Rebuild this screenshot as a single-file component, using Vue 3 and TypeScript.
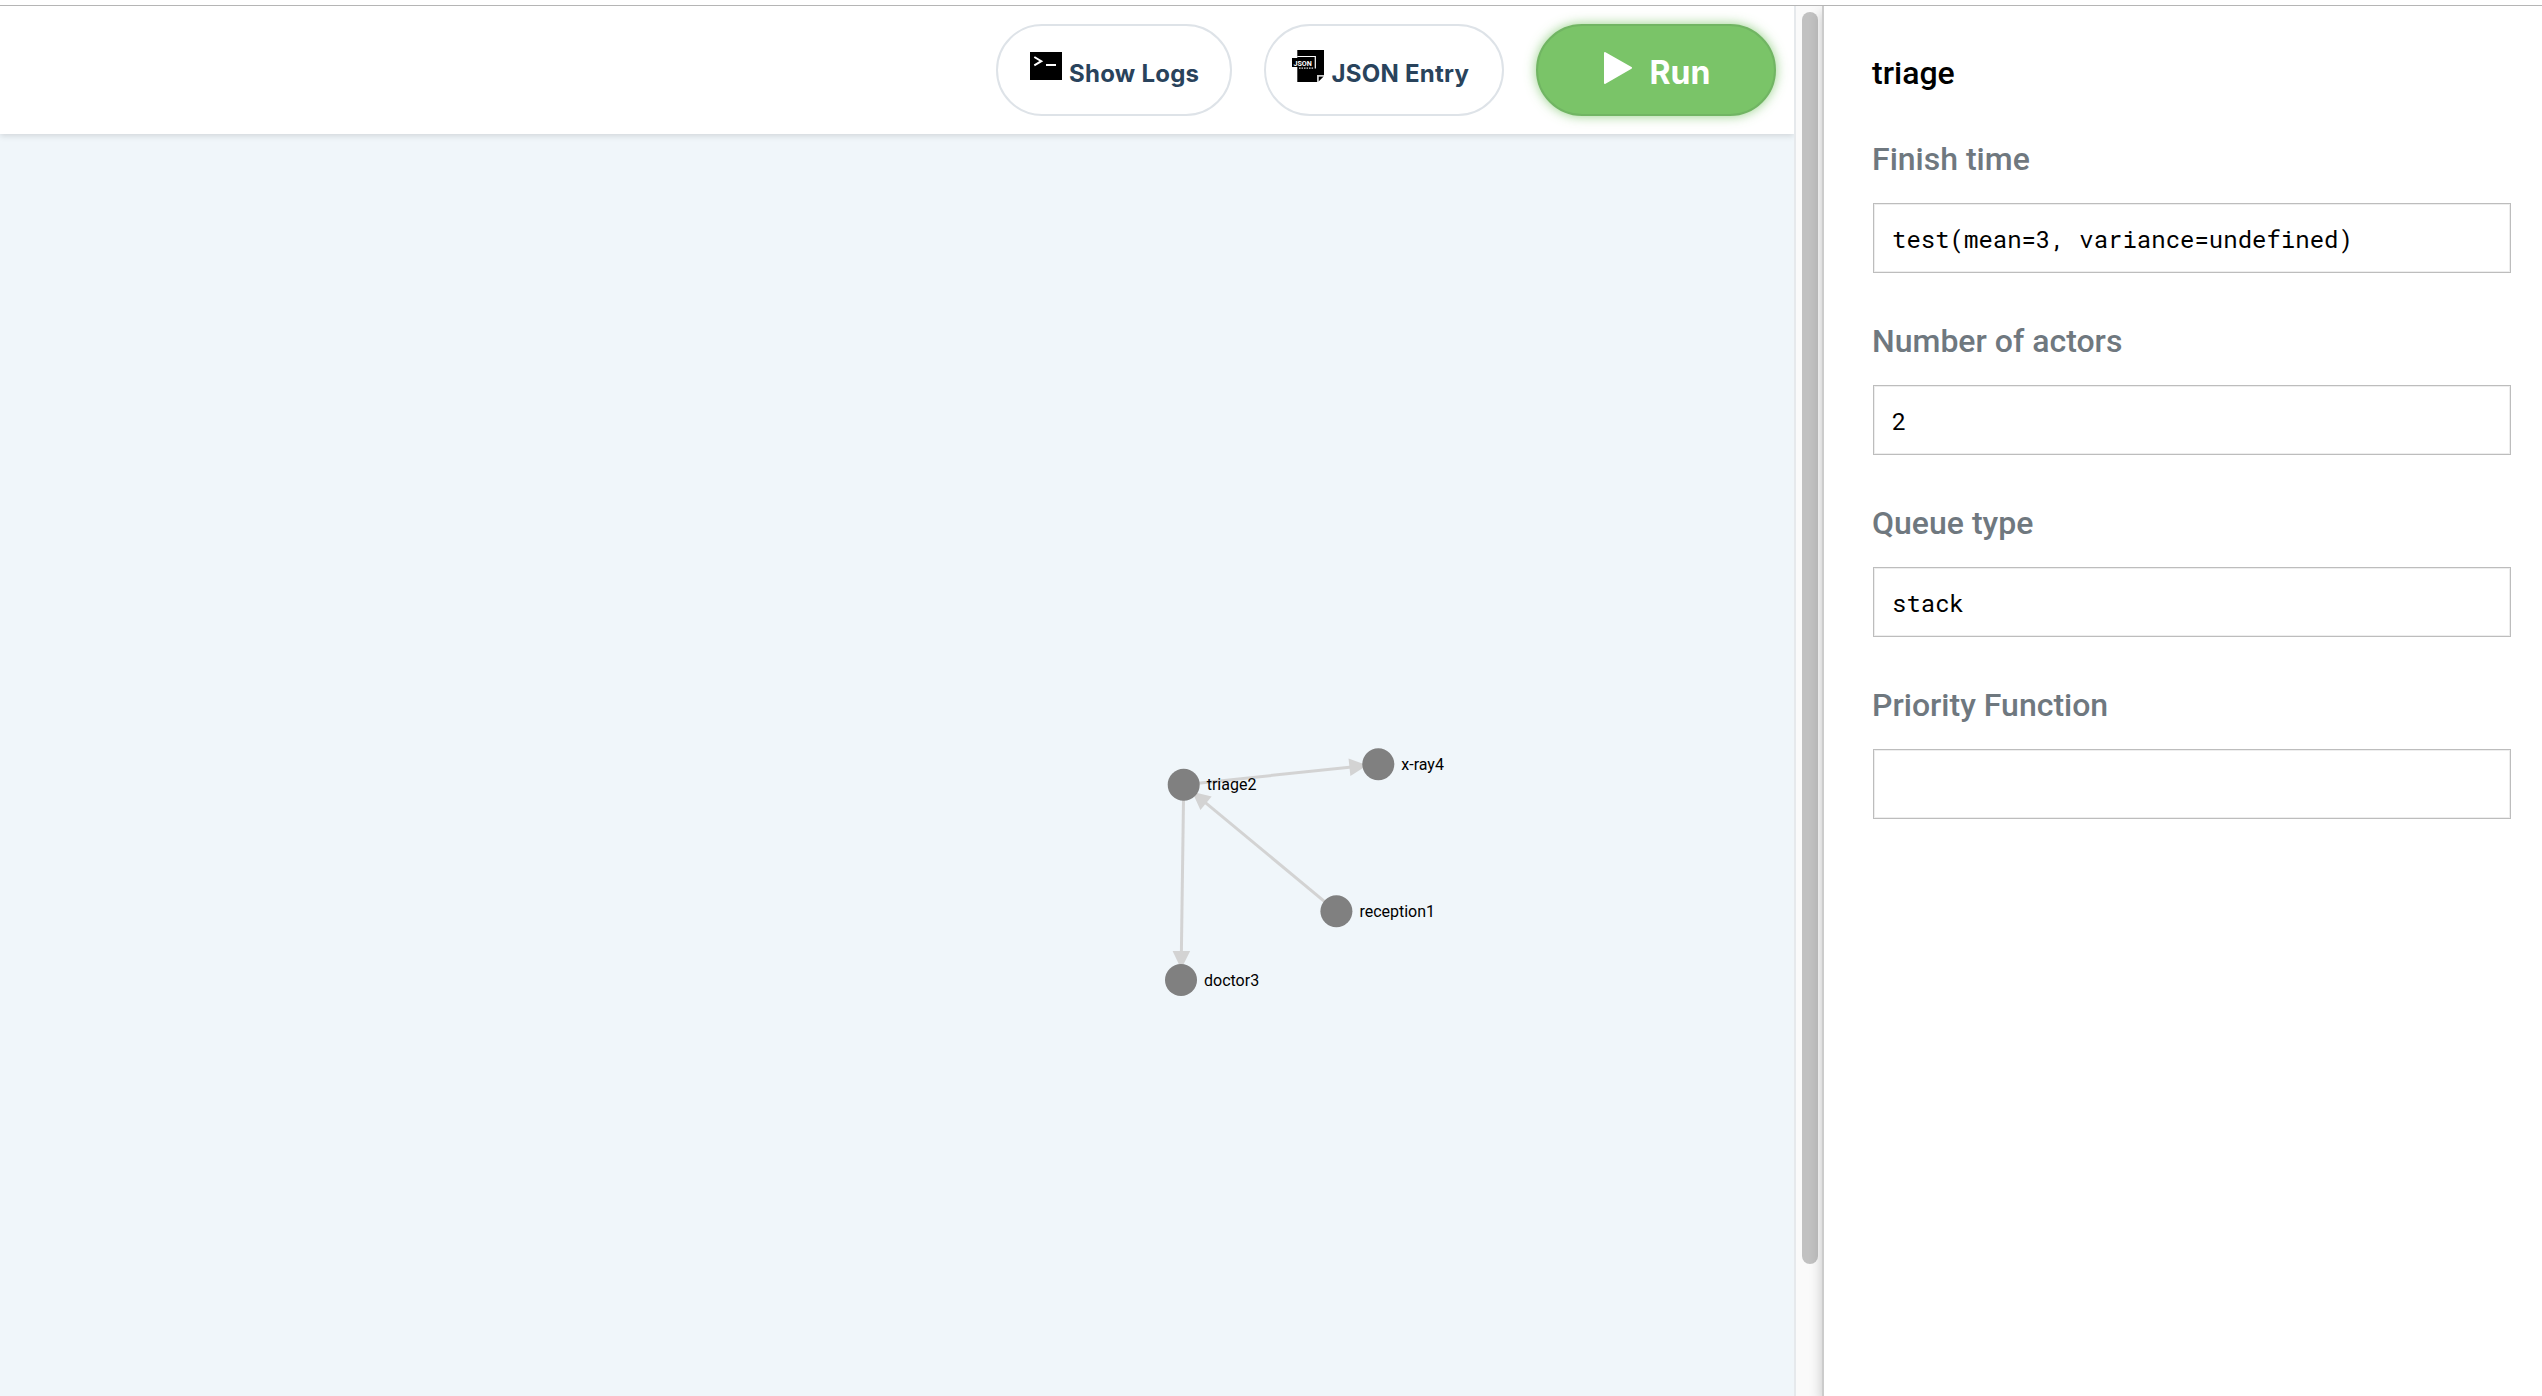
<script setup lang="ts">
interface GraphNode {
  id: string
  x: number
  y: number
}

interface Edge {
  from: GraphNode
  to: GraphNode
}

interface Field {
  label: string
  value: string
}

const triage: GraphNode = { id: 'triage2', x: 1183.7, y: 784.7 }
const xray: GraphNode = { id: 'x-ray4', x: 1378.3, y: 764.2 }
const reception: GraphNode = { id: 'reception1', x: 1336.4, y: 911.3 }
const doctor: GraphNode = { id: 'doctor3', x: 1181, y: 980 }

const nodes = [reception, triage, doctor, xray]
const edges: Edge[] = [
  { from: triage, to: xray },
  { from: reception, to: triage },
  { from: triage, to: doctor },
]

// Arrowhead triangle pointing at the target node, in page units.
function arrow({ from, to }: Edge): string {
  const length = Math.hypot(to.x - from.x, to.y - from.y)
  const ux = (to.x - from.x) / length
  const uy = (to.y - from.y) / length
  const bx = to.x - ux * 29
  const by = to.y - uy * 29
  const points = [
    [to.x - ux * 11, to.y - uy * 11],
    [bx - uy * 8.8, by + ux * 8.8],
    [bx + uy * 8.8, by - ux * 8.8],
  ]
  return points.map((p) => p.join(',')).join(' ')
}

const fields: Field[] = [
  { label: 'Finish time', value: 'test(mean=3, variance=undefined)' },
  { label: 'Number of actors', value: '2' },
  { label: 'Queue type', value: 'stack' },
  { label: 'Priority Function', value: '' },
]
</script>

<template>
  <div class="app">
    <main class="workspace">
      <header class="toolbar">
        <button class="btn logs" type="button">
          <svg class="icon" width="32" height="28" viewBox="0 0 32 28">
            <rect width="32" height="28" fill="#000" />
            <path d="M4.3 5l7 4.2-7 4.2" fill="none" stroke="#fff" stroke-width="2" />
            <rect x="16" y="12" width="10" height="2" fill="#fff" />
          </svg>
          <span>Show Logs</span>
        </button>
        <button class="btn json" type="button">
          <svg class="icon" width="32" height="32" viewBox="0 0 32 32">
            <path d="M5.3 0H32V25H25V32H5.3Z" fill="#000" />
            <path d="M26.6 26.6H31.6L26.6 31.6Z" fill="#000" />
            <path d="M25.6 32V25.6H32" fill="none" stroke="#ccc" stroke-width="1.2" />
            <path d="M5.3 6.5H23.3V18.5" fill="none" stroke="#fff" stroke-width="1.2" />
            <path d="M7 18.2H22" fill="none" stroke="#ddd" stroke-width="1.3" stroke-dasharray="1.6 .9" />
            <rect y="8" width="21.6" height="9" fill="#000" />
            <text
              x="1.4"
              y="15.5"
              class="badge"
              textLength="18.4"
              lengthAdjust="spacingAndGlyphs"
            >JSON</text>
          </svg>
          <span>JSON Entry</span>
        </button>
        <button class="btn run" type="button">
          <svg class="icon" width="28" height="32" viewBox="0 0 28 32">
            <path
              d="M1 1L27 15.8L1 31Z"
              fill="#fff"
              stroke="#fff"
              stroke-width="2"
              stroke-linejoin="round"
            />
          </svg>
          <span>Run</span>
        </button>
      </header>
      <svg class="canvas" width="1794" height="1262" viewBox="0 134 1794 1262">
        <g v-for="edge in edges" :key="edge.from.id + edge.to.id">
          <line
            class="edge"
            :x1="edge.from.x"
            :y1="edge.from.y"
            :x2="edge.to.x"
            :y2="edge.to.y"
          />
          <polygon class="head" :points="arrow(edge)" />
        </g>
        <g v-for="node in nodes" :key="node.id">
          <circle class="node" :cx="node.x" :cy="node.y" r="16" />
          <text class="name" :x="node.x + 23" :y="node.y + 5.6">{{ node.id }}</text>
        </g>
      </svg>
    </main>
    <div class="track"><div class="thumb"></div></div>
    <aside class="panel">
      <h2>triage</h2>
      <div v-for="field in fields" :key="field.label" class="field">
        <label>{{ field.label }}</label>
        <input type="text" :value="field.value" />
      </div>
    </aside>
  </div>
</template>

<style>
body {
  margin: 0;
  overflow: hidden;
}
</style>

<style scoped>
.app {
  box-sizing: border-box;
  display: flex;
  height: 1396px;
  padding-top: 6px;
  background: linear-gradient(#b5b5b5, #b5b5b5) 0 5px / 100% 1px no-repeat #fff;
  overflow: hidden;
}
.workspace {
  display: flex;
  flex-direction: column;
  width: 1794px;
  flex: none;
  border-right: 2px solid #e6e9ec;
}
.toolbar {
  position: relative;
  box-sizing: border-box;
  display: flex;
  justify-content: flex-end;
  gap: 32px;
  height: 128px;
  flex: none;
  padding: 18px 18px 0 0;
  background: #fff;
  box-shadow: 0 2px 6px rgba(0, 0, 0, 0.13);
  clip-path: inset(0 0 -12px 0);
}
.btn {
  box-sizing: border-box;
  display: flex;
  align-items: flex-start;
  height: 92px;
  margin: 0;
  padding: 0;
  border: 2px solid #dee3e8;
  border-radius: 46px;
  background: #fff;
  color: #29435c;
  font: 700 24px/29px Inter, sans-serif;
  letter-spacing: 0.25px;
  white-space: nowrap;
}
.icon {
  display: block;
  flex: none;
}
.btn span {
  margin-top: 33px;
}
.logs {
  width: 236px;
  padding-left: 32px;
}
.logs .icon {
  margin: 26px 7px 0 0;
}
.json {
  width: 240px;
  padding-left: 26px;
}
.json .icon {
  margin: 24px 7.5px 0 0;
}
.badge {
  fill: #fff;
  font: 700 7.6px Roboto, sans-serif;
  letter-spacing: 0;
}
.run {
  width: 240px;
  padding-left: 66px;
  border-color: #71b563;
  background: #7ac468;
  color: #fff;
  font-size: 32px;
  line-height: 39px;
  letter-spacing: 0;
  box-shadow: 0 0 12px rgba(122, 196, 104, 0.8);
}
.run .icon {
  margin: 26px 17.5px 0 0;
}
.run span {
  margin-top: 27px;
}
.canvas {
  display: block;
  background: #f0f6fa;
}
.edge {
  stroke: #d3d3d3;
  stroke-width: 3;
}
.head {
  fill: #d3d3d3;
}
.node {
  fill: #808080;
}
.name {
  fill: #000;
  font: 400 16px Roboto, sans-serif;
}
.track {
  box-sizing: border-box;
  width: 26px;
  flex: none;
  padding: 6px 4px 0 6px;
  background: #fafafa;
}
.thumb {
  width: 16px;
  height: 1252px;
  border-radius: 8px;
  background: #c1c1c1;
}
.panel {
  position: relative;
  box-sizing: border-box;
  flex: 1;
  padding: 48px 31px 0 48px;
  border-left: 2px solid #ccc;
  background: #fff;
  box-shadow: 0 6px 12px rgba(0, 0, 0, 0.22);
  clip-path: inset(0 0 0 -20px);
}
.panel h2,
.panel label {
  display: block;
  margin: 0;
  color: #000;
  font: 500 32px/38px Roboto, sans-serif;
}
.panel h2 {
  margin-bottom: 48px;
}
.panel label {
  margin-bottom: 25px;
  color: #6f787f;
}
.field {
  margin-bottom: 49px;
}
.field input {
  display: block;
  box-sizing: border-box;
  width: calc(100% - 1px);
  height: 70px;
  margin: 0 0 0 1px;
  padding: 2px 18px 0;
  border: 1px solid #bdbdbd;
  border-radius: 0;
  outline: none;
  background: #fff;
  box-shadow: inset 0 0 0 1px #eee;
  color: #000;
  font: 400 24px/32px 'Roboto Mono', 'Liberation Mono', monospace;
}
</style>
